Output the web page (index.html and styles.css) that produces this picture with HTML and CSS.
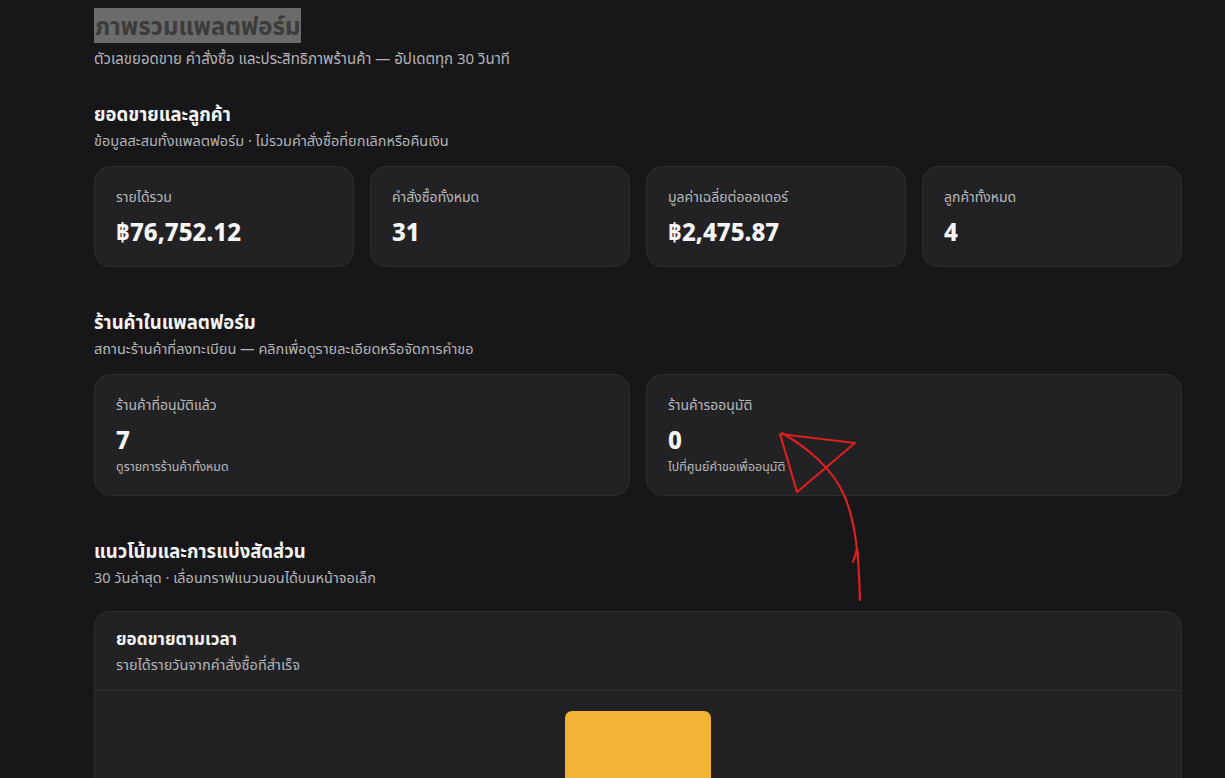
FILE: index.html
```html
<!DOCTYPE html>
<html lang="th">
<head>
    <meta charset="UTF-8">
    <meta name="viewport" content="width=device-width, initial-scale=1.0">
    <title>ภาพรวมแพลตฟอร์ม</title>
    <link rel="stylesheet" href="styles.css">
</head>
<body>
    <main class="page">
        <header class="page-head">
            <h1><span class="hl">ภาพรวมแพลตฟอร์ม</span></h1>
            <p class="muted">ตัวเลขยอดขาย คำสั่งซื้อ และประสิทธิภาพร้านค้า — อัปเดตทุก 30 วินาที</p>
        </header>

        <section class="block">
            <h2>ยอดขายและลูกค้า</h2>
            <p class="muted sm">ข้อมูลสะสมทั้งแพลตฟอร์ม · ไม่รวมคำสั่งซื้อที่ยกเลิกหรือคืนเงิน</p>
            <div class="stats four">
                <div class="stat">
                    <div class="stat-label">รายได้รวม</div>
                    <div class="stat-value">฿76,752.12</div>
                </div>
                <div class="stat">
                    <div class="stat-label">คำสั่งซื้อทั้งหมด</div>
                    <div class="stat-value">31</div>
                </div>
                <div class="stat">
                    <div class="stat-label">มูลค่าเฉลี่ยต่อออเดอร์</div>
                    <div class="stat-value">฿2,475.87</div>
                </div>
                <div class="stat">
                    <div class="stat-label">ลูกค้าทั้งหมด</div>
                    <div class="stat-value">4</div>
                </div>
            </div>
        </section>

        <section class="block">
            <h2>ร้านค้าในแพลตฟอร์ม</h2>
            <p class="muted sm">สถานะร้านค้าที่ลงทะเบียน — คลิกเพื่อดูรายละเอียดหรือจัดการคำขอ</p>
            <div class="stats two">
                <a class="stat link" href="#">
                    <div class="stat-label">ร้านค้าที่อนุมัติแล้ว</div>
                    <div class="stat-value">7</div>
                    <div class="stat-note">ดูรายการร้านค้าทั้งหมด</div>
                </a>
                <a class="stat link" href="#">
                    <div class="stat-label">ร้านค้ารออนุมัติ</div>
                    <div class="stat-value">0</div>
                    <div class="stat-note">ไปที่ศูนย์คำขอเพื่ออนุมัติ</div>
                </a>
            </div>
        </section>

        <section class="block">
            <h2>แนวโน้มและการแบ่งสัดส่วน</h2>
            <p class="muted sm">30 วันล่าสุด · เลื่อนกราฟแนวนอนได้บนหน้าจอเล็ก</p>
            <div class="chart-card">
                <div class="chart-head">
                    <h3>ยอดขายตามเวลา</h3>
                    <p class="muted sm">รายได้รายวันจากคำสั่งซื้อที่สำเร็จ</p>
                </div>
                <div class="chart-body">
                    <div class="bar" style="height: 100%"></div>
                </div>
            </div>
        </section>
    </main>

    <!-- hand-drawn pointer over the pending card -->
    <svg class="scribble" width="1225" height="778" viewBox="0 0 1225 778">
        <g fill="none" stroke="#dc1f1f" stroke-width="2.2" stroke-linecap="round" stroke-linejoin="round">
            <path d="M780 434 L855 443 L797 492 Z"/>
            <path d="M860 600 C859 570 858 540 850 512 C842 480 820 455 782 433"/>
            <path d="M853 562 L857 549 L858 556"/>
        </g>
    </svg>
</body>
</html>
```

FILE: styles.css
```css
* {
    margin: 0;
    padding: 0;
    box-sizing: border-box;
}

body {
    font-family: "Noto Sans", "Noto Sans Thai", sans-serif;
    background: #171719;
    color: #f4f4f5;
    min-height: 100vh;
    overflow: hidden;
}

.page {
    width: 1088px;
    margin-left: 94px;
    padding-top: 7px;
}

.muted {
    color: #b4b4b8;
    font-size: 15px;
    line-height: 20px;
}

.sm {
    font-size: 14.5px;
    margin-top: 3px;
}

h1 {
    font-size: 24px;
    font-weight: 700;
    line-height: 38px;
    margin-bottom: 3px;
}

.hl {
    background: #6b6b6b;
    color: #3c3c3c;
    padding: 1px 1px;
}

h2 {
    font-size: 18.5px;
    font-weight: 700;
    line-height: 26px;
}

h3 {
    font-size: 17px;
    font-weight: 700;
    line-height: 22px;
}

.block {
    margin-top: 42px;
}

.page-head + .block {
    margin-top: 33px;
}

.stats {
    display: grid;
    gap: 16px;
    margin-top: 16px;
}

.four {
    grid-template-columns: repeat(4, 1fr);
}

.two {
    grid-template-columns: repeat(2, 1fr);
}

.stat {
    display: block;
    background: #222224;
    border: 1px solid #2d2d30;
    border-radius: 16px;
    padding: 19px 21px;
    color: inherit;
    text-decoration: none;
}

.stat-label {
    color: #b8b8bc;
    font-size: 14px;
    line-height: 22px;
}

.stat-value {
    font-size: 24px;
    font-weight: 800;
    line-height: 30px;
    margin-top: 9px;
    color: #f5f5f7;
}

.stat-note {
    color: #b8b8bc;
    font-size: 12.4px;
    line-height: 18px;
    margin-top: 3px;
}

.chart-card {
    margin-top: 24px;
    background: #222224;
    border: 1px solid #2d2d30;
    border-radius: 16px;
    height: 240px;
}

.chart-head {
    padding: 16px 21px 16px;
    border-bottom: 1px solid #2f2f32;
}

.chart-head .sm {
    margin-top: 4px;
}

.chart-body {
    height: 140px;
    padding: 20px 0 0 470px;
}

.bar {
    width: 146px;
    background: #f3b335;
    border-radius: 7px 7px 0 0;
}

.scribble {
    position: absolute;
    top: 0;
    left: 0;
    pointer-events: none;
}
```
